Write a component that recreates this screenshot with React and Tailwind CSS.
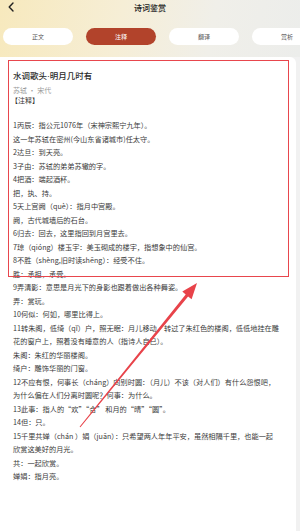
import React from 'react';

const tabs = [
  { label: '正文', active: false },
  { label: '注释', active: true },
  { label: '翻译', active: false },
  { label: '赏析', active: false },
];

const notes = [
  '1丙辰：指公元1076年（宋神宗熙宁九年）。',
  '这一年苏轼在密州(今山东省诸城市)任太守。',
  '2达旦：到天亮。',
  '3子由：苏轼的弟弟苏辙的字。',
  '4把酒：端起酒杯。',
  '把，执、持。',
  '5天上宫阙（què）：指月中宫殿。',
  '阙，古代城墙后的石台。',
  '6归去：回去，这里指回到月宫里去。',
  '7琼（qióng）楼玉宇：美玉砌成的楼宇，指想象中的仙宫。',
  '8不胜（shèng,旧时读shēng）：经受不住。',
  '胜：承担，承受。',
  '9弄清影：意思是月光下的身影也跟着做出各种舞姿。',
  '弄：赏玩。',
  '10何似：何如，哪里比得上。',
  '11转朱阁，低绮（qǐ）户，照无眠：月儿移动，转过了朱红色的楼阁，低低地挂在雕',
  '花的窗户上，照着没有睡意的人（指诗人自己）。',
  '朱阁：朱红的华丽楼阁。',
  '绮户：雕饰华丽的门窗。',
  '12不应有恨，何事长（cháng）向别时圆：（月儿）不该（对人们）有什么怨恨吧，',
  '为什么偏在人们分离时圆呢？何事：为什么。',
  '13此事：指人的“欢”“合” 和月的“晴”“圆”。',
  '14但：只。',
  '15千里共婵（chán ）娟（juān）：只希望两人年年平安，虽然相隔千里，也能一起',
  '欣赏这美好的月光。',
  '共：一起欣赏。',
  '婵娟：指月亮。',
];

const App = () => {
  return (
    <div className="relative w-[300px] h-[531px] overflow-hidden bg-[#f1f1f1] font-['Noto_Sans_CJK_SC','Noto_Sans',sans-serif]">
      {/* header */}
      <div className="h-[57px] bg-[linear-gradient(100deg,#f7e9bd_0%,#f6eed6_40%,#f0efe9_70%,#ecedeb_100%)]">
        <div className="relative h-[14px] flex items-center justify-center">
          <svg className="absolute left-[8px] top-[2px]" width="6" height="10" viewBox="0 0 6 10">
            <polyline points="5,1 1.2,5 5,9" fill="none" stroke="#222" strokeWidth="1.4" strokeLinecap="round" strokeLinejoin="round" />
          </svg>
          <span className="text-[8px] font-medium text-[#222] leading-none mt-[1px]">诗词鉴赏</span>
        </div>
        <div className="flex gap-[13px] pl-[3px] mt-[14px] whitespace-nowrap">
          {tabs.map((t) => (
            <div
              key={t.label}
              className={`shrink-0 w-[70px] h-[17px] rounded-full flex items-center justify-center text-[6px] ${
                t.active ? 'bg-[#b2432b] text-white' : 'bg-white text-[#555]'
              }`}
            >
              {t.label}
            </div>
          ))}
        </div>
      </div>

      {/* content card */}
      <div className="w-[296px] h-[474px] bg-white rounded-tr-[6px] pl-[13px] pt-[11px]">
        <div className="text-[8.5px] leading-[14px] font-medium text-[#2a2a2a]">
          水调歌头<span className="font-['Liberation_Sans',sans-serif]">·</span>明月几时有
        </div>
        <div className="mt-[2px] text-[7px] leading-[10px] text-[#9a9a9a]">苏轼 · 宋代</div>
        <div className="text-[7px] leading-[10px] text-[#333] -ml-[2px]">【注释】</div>
        <div className="mt-[14px] text-[7.2px] leading-[13.5px] text-[#3a3a3a]">
          {notes.map((line, i) => (
            <div key={i} className="whitespace-nowrap">{line}</div>
          ))}
        </div>
      </div>

      {/* annotation overlay */}
      <div className="absolute left-[8px] top-[60px] w-[281px] h-[217px] border-[1.5px] border-[#e8464d]" />
      <svg className="absolute left-0 top-0" width="300" height="531" viewBox="0 0 300 531">
        <polygon
          points="79.6,426.7 185.7,294.5 182.3,291.6 197,283 191.6,299.2 188.1,296.4 80.4,427.3"
          fill="#e8434a"
        />
      </svg>
    </div>
  );
};

export default App;
